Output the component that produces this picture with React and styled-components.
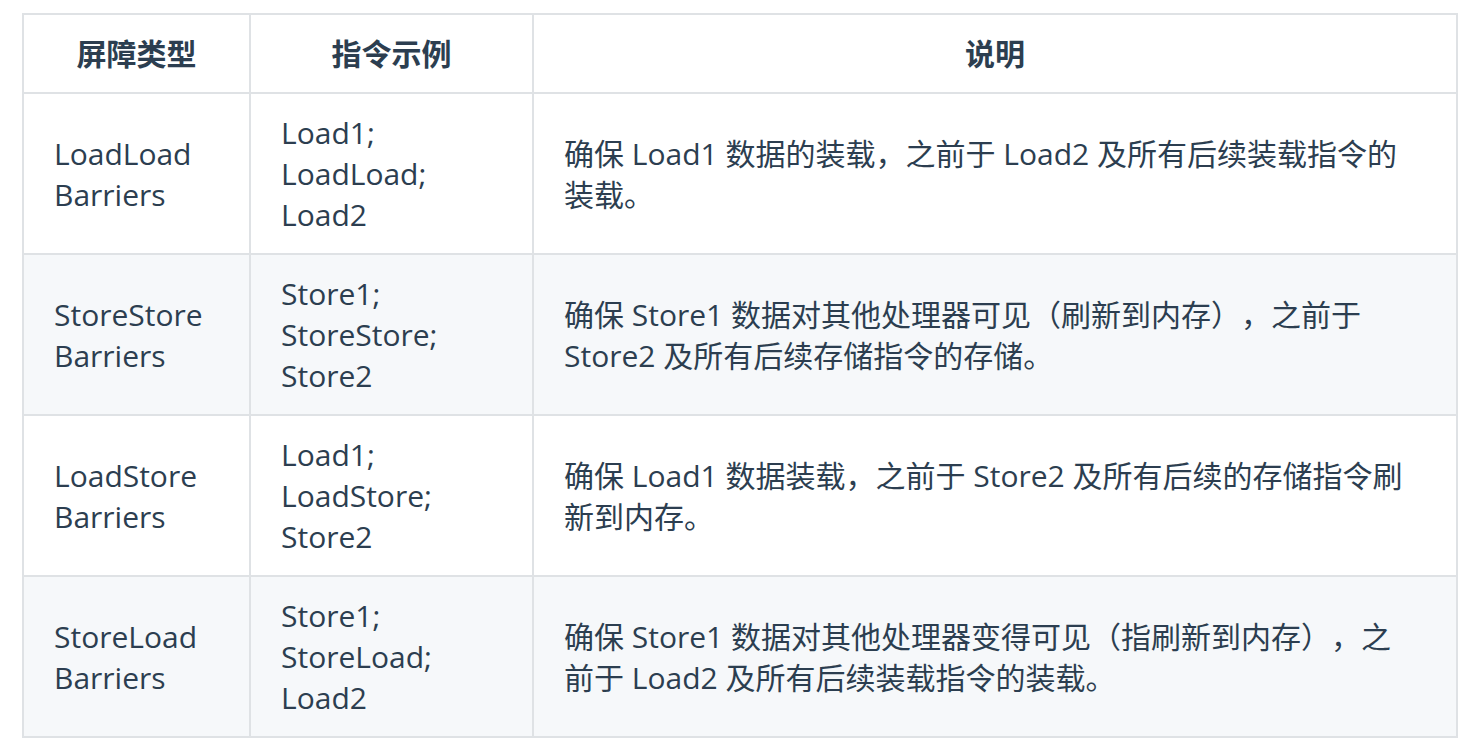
import React from "react";
import styled, { createGlobalStyle } from "styled-components";

const Global = createGlobalStyle`
  html, body { margin: 0; padding: 0; background: #ffffff; }
  body {
    font-family: "Open Sans", "Noto Sans CJK SC", sans-serif;
    color: #2c3e50;
    -webkit-font-smoothing: antialiased;
  }
`;

const Page = styled.div`
  padding: 13px 19px 13px 22px;
`;

const Table = styled.table`
  width: 1434px;
  border-collapse: collapse;
  table-layout: fixed;
  font-size: 30px;
  line-height: 41px;
  text-spacing-trim: space-all;
`;

const Col = styled.col`
  width: ${(p) => p.$w}px;
`;

const Row = styled.tr`
  background: ${(p) => (p.$striped ? "#f6f8fa" : "#ffffff")};
`;

const Th = styled.th`
  border: 2px solid #dfe2e5;
  padding: 18px 30px;
  font-weight: 700;
  text-align: center;
  vertical-align: middle;
`;

const Td = styled.td`
  border: 2px solid #dfe2e5;
  padding: 18px ${(p) => (p.$wide ? 45 : 30)}px 18px 30px;
  text-align: left;
  vertical-align: middle;
`;

const Line = styled.div`
  white-space: nowrap;
`;

const rows = [
  {
    type: "LoadLoad Barriers",
    example: ["Load1;", "LoadLoad;", "Load2"],
    desc: "确保 Load1 数据的装载，之前于 Load2 及所有后续装载指令的装载。",
  },
  {
    type: "StoreStore Barriers",
    example: ["Store1;", "StoreStore;", "Store2"],
    desc: "确保 Store1 数据对其他处理器可见（刷新到内存），之前于 Store2 及所有后续存储指令的存储。",
  },
  {
    type: "LoadStore Barriers",
    example: ["Load1;", "LoadStore;", "Store2"],
    desc: "确保 Load1 数据装载，之前于 Store2 及所有后续的存储指令刷新到内存。",
  },
  {
    type: "StoreLoad Barriers",
    example: ["Store1;", "StoreLoad;", "Load2"],
    desc: "确保 Store1 数据对其他处理器变得可见（指刷新到内存），之前于 Load2 及所有后续装载指令的装载。",
  },
];

export default function App() {
  return (
    <>
      <Global />
      <Page>
        <Table>
          <colgroup>
            <Col $w={227} />
            <Col $w={283} />
            <Col $w={924} />
          </colgroup>
          <thead>
            <Row>
              <Th>屏障类型</Th>
              <Th>指令示例</Th>
              <Th>说明</Th>
            </Row>
          </thead>
          <tbody>
            {rows.map((r, i) => (
              <Row key={r.type} $striped={i % 2 === 1}>
                <Td>{r.type}</Td>
                <Td>
                  {r.example.map((e, j) => (
                    <Line key={j}>{e}</Line>
                  ))}
                </Td>
                <Td $wide>{r.desc}</Td>
              </Row>
            ))}
          </tbody>
        </Table>
      </Page>
    </>
  );
}
